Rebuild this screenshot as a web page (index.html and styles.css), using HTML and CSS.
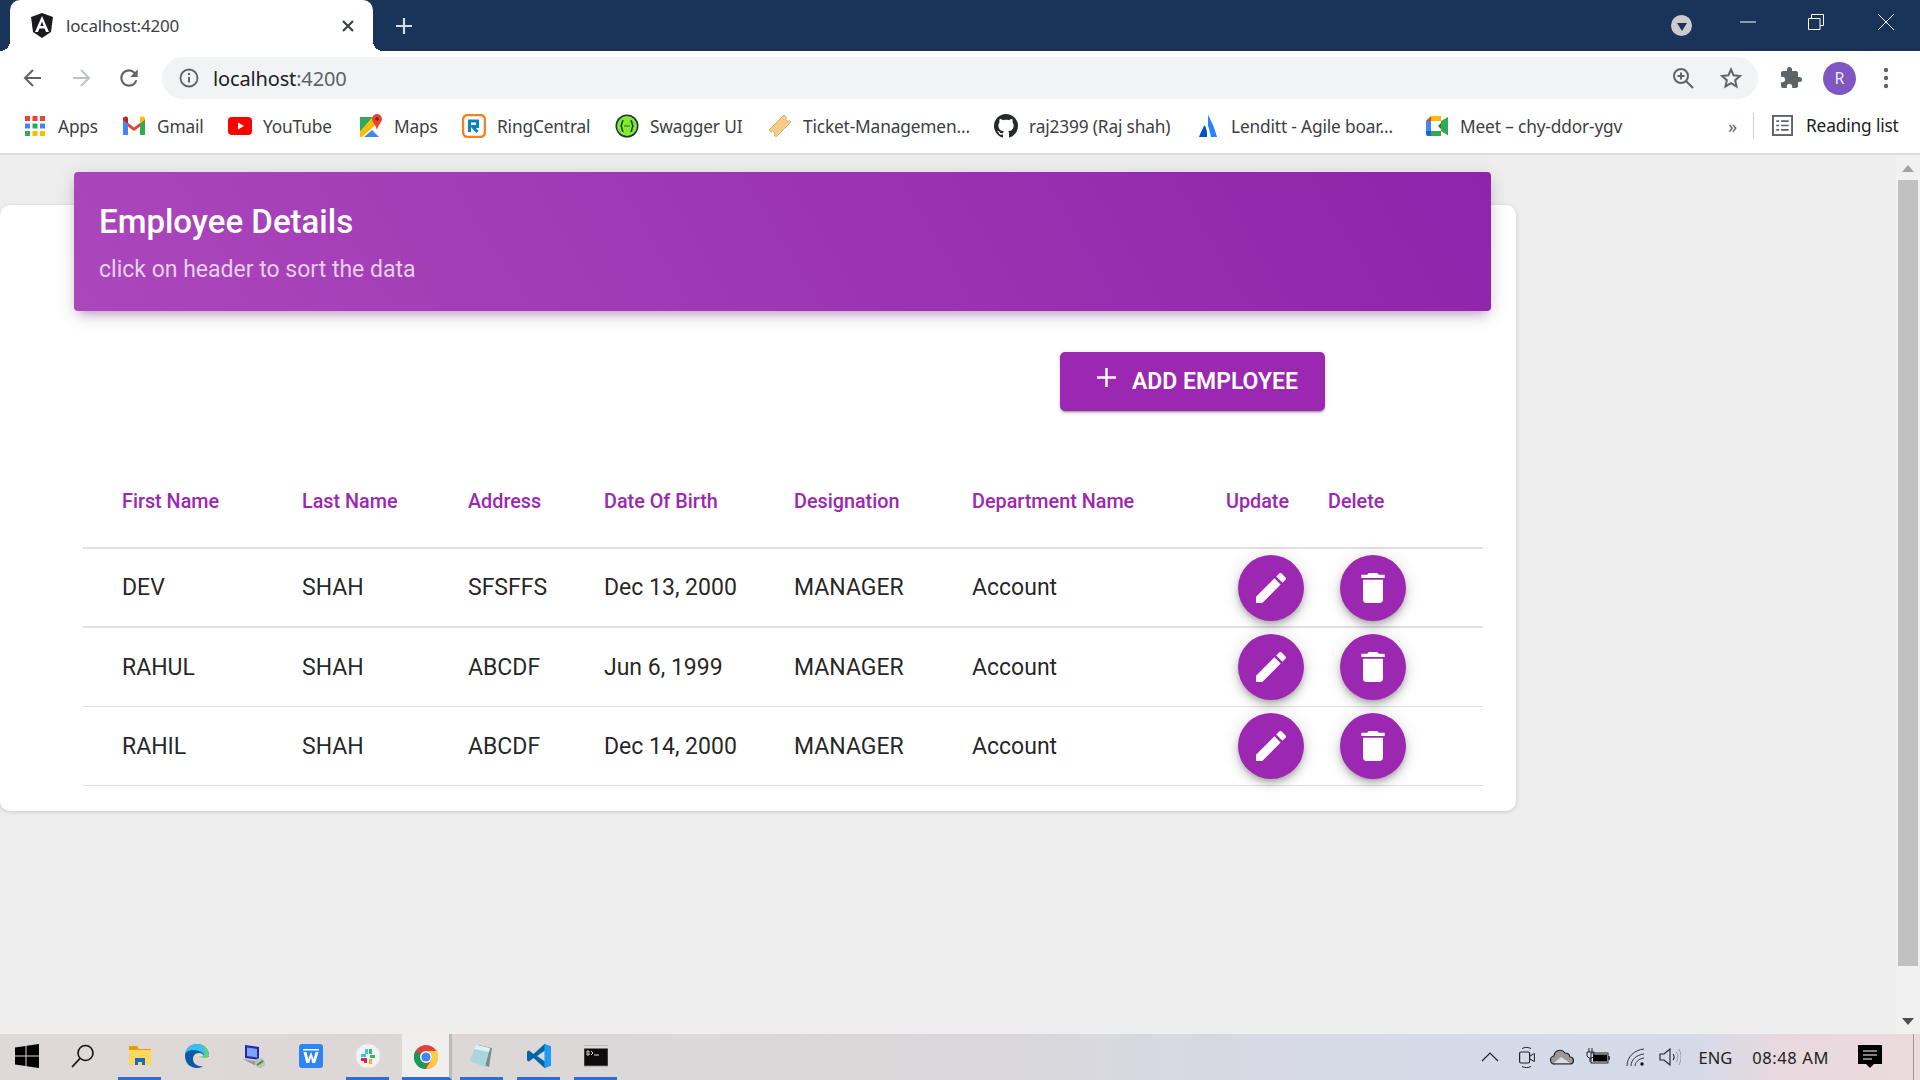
FILE: index.html
```html
<!DOCTYPE html>
<html lang="en">
<head>
<meta charset="utf-8">
<title>localhost:4200</title>
<link rel="stylesheet" href="styles.css">
</head>
<body>
<header class="chrome">
  <div class="tabstrip">
    <div class="tab">
      <svg class="favicon" viewBox="0 0 24 26"><path fill="#1b1b1f" d="M12 0 1 4l2 15 9 6 9-6 2-15z"/><path fill="#fff" d="M12 3 5 19h3l1.400-3.500h5.200L16 19h3zm0 5.500 1.700 4.500h-3.400z"/></svg>
      <span class="tab-title">localhost:4200</span>
      <svg class="tab-close" viewBox="0 0 14 14"><path d="M2 2l10 10M12 2 2 12" stroke="#3c4043" stroke-width="2.200" fill="none"/></svg>
    </div>
    <svg class="newtab" viewBox="0 0 18 18"><path d="M9 1v16M1 9h16" stroke="#d5dae3" stroke-width="2.200" fill="none"/></svg>
    <div class="strip-right">
      <span class="tabsearch"><svg viewBox="0 0 10 8" class="tabsearch-arrow"><path d="M0 0h10L5 8z" fill="#1a3359"/></svg></span>
      <svg class="winbtn min" viewBox="0 0 16 16"><path d="M0 8h16" stroke="#fff" stroke-width="1" fill="none"/></svg>
      <svg class="winbtn restore" viewBox="0 0 16 16"><path d="M.5 4.500h11.500v11H.5zM3.500 4.500v-4h12v11H12" stroke="#fff" stroke-width="1" fill="none"/></svg>
      <svg class="winbtn close" viewBox="0 0 16 16"><path d="M0 0l16 16M16 0 0 16" stroke="#fff" stroke-width="1" fill="none"/></svg>
    </div>
  </div>
  <div class="toolbar">
    <svg class="nav back" viewBox="0 0 24 24"><path d="M20 12H5M12 4l-8 8 8 8" stroke="#5f6368" stroke-width="2" fill="none"/></svg>
    <svg class="nav fwd" viewBox="0 0 24 24"><path d="M4 12h15M12 4l8 8-8 8" stroke="#bdc1c6" stroke-width="2" fill="none"/></svg>
    <svg class="nav reload" viewBox="0 0 24 24"><path fill="#5f6368" d="M17.650 6.350A7.958 7.958 0 0 0 12 4c-4.420 0-7.990 3.580-7.990 8s3.570 8 7.990 8c3.730 0 6.840-2.550 7.730-6h-2.080A5.990 5.990 0 0 1 12 18c-3.310 0-6-2.690-6-6s2.690-6 6-6c1.660 0 3.140.69 4.220 1.780L13 11h7V4z"/></svg>
    <div class="omnibox">
      <svg class="info" viewBox="0 0 20 20"><circle cx="10" cy="10" r="8.500" stroke="#5f6368" stroke-width="1.800" fill="none"/><path d="M10 9v5.500" stroke="#5f6368" stroke-width="2"/><circle cx="10" cy="6" r="1.200" fill="#5f6368"/></svg>
      <span class="url">localhost<span class="url-port">:4200</span></span>
      <svg class="zoomicon" viewBox="0 0 22 22"><circle cx="9" cy="9" r="7" stroke="#5f6368" stroke-width="2" fill="none"/><path d="M14 14l7 7M9 5.500v7M5.500 9h7" stroke="#5f6368" stroke-width="2" fill="none"/></svg>
      <svg class="star" viewBox="0 0 24 24"><path d="M12 3.500l2.600 5.800 6.300.7-4.700 4.200 1.300 6.200-5.500-3.200-5.500 3.200 1.300-6.200L3.100 10l6.300-.7z" stroke="#5f6368" stroke-width="2" fill="none"/></svg>
    </div>
    <svg class="puzzle" viewBox="0 0 24 24"><path fill="#5f6368" d="M20.500 11H19V7c0-1.100-.9-2-2-2h-4V3.500a2.500 2.500 0 0 0-5 0V5H4c-1.100 0-2 .9-2 2v3.800h1.500c1.500 0 2.700 1.200 2.700 2.700S5 16.200 3.500 16.200H2V20c0 1.100.9 2 2 2h3.800v-1.500c0-1.500 1.200-2.700 2.700-2.700s2.700 1.200 2.700 2.700V22H17c1.100 0 2-.9 2-2v-4h1.500a2.500 2.500 0 0 0 0-5z"/></svg>
    <span class="avatar">R</span>
    <svg class="dots" viewBox="0 0 6 22"><circle cx="3" cy="3" r="2.200" fill="#5f6368"/><circle cx="3" cy="11" r="2.200" fill="#5f6368"/><circle cx="3" cy="19" r="2.200" fill="#5f6368"/></svg>
  </div>
  <div class="bookmarks">
    <a class="bm"><svg class="bm-icon" viewBox="0 0 24 24"><path fill="#ea4335" d="M2 2h5v5H2zM9.500 2h5v5h-5zM17 2h5v5h-5z"/><path fill="#4285f4" d="M2 9.500h5v5H2z"/><path fill="#34a853" d="M9.500 9.500h5v5h-5z"/><path fill="#4285f4" d="M17 9.500h5v5h-5z"/><path fill="#34a853" d="M2 17h5v5H2z"/><path fill="#fbbc04" d="M9.500 17h5v5h-5zM17 17h5v5h-5z"/></svg><span>Apps</span></a>
    <a class="bm"><svg class="bm-icon" viewBox="0 0 24 24"><path fill="#ea4335" d="M1 5l11 8.500L23 5v4l-11 8L1 9z"/><path fill="#4285f4" d="M1 6v15h5V9.500z"/><path fill="#34a853" d="M23 6v15h-5V9.500z"/><path fill="#c5221f" d="M1 5c0-2 2-3 4-2l1 .8v5.700L1 6z"/><path fill="#fbbc04" d="M23 5c0-2-2-3-4-2l-1 .8v5.700L23 6z"/></svg><span>Gmail</span></a>
    <a class="bm"><svg class="bm-icon" viewBox="0 0 24 24"><rect x="0" y="3" width="24" height="18" rx="4" fill="#f00"/><path fill="#fff" d="M10 8.500l6 3.500-6 3.500z"/></svg><span>YouTube</span></a>
    <a class="bm"><svg class="bm-icon" viewBox="0 0 24 24"><path fill="#34a853" d="M1 3h13L1 18z"/><path fill="#fbbc04" d="M1 18 14 3l5 6L3 23H1z"/><path fill="#4285f4" d="M5 23l8-7 7 7z"/><path fill="#ea4335" d="M18 0a5 5 0 0 1 5 5c0 3-4 6-5 11-1-5-5-8-5-11a5 5 0 0 1 5-5z"/><circle cx="18" cy="5" r="1.800" fill="#8e1a12"/></svg><span>Maps</span></a>
    <a class="bm"><svg class="bm-icon" viewBox="0 0 24 24"><rect x="1" y="1" width="22" height="22" rx="5" fill="#fff" stroke="#f58220" stroke-width="2.500"/><path d="M7.500 18V7h8v5.500h-5l5 5.500" stroke="#0684bd" stroke-width="3" fill="none"/></svg><span>RingCentral</span></a>
    <a class="bm"><svg class="bm-icon" viewBox="0 0 24 24"><circle cx="12" cy="12" r="11.500" fill="#173647"/><circle cx="12" cy="12" r="10" fill="#85ea2d"/><path d="M8.500 6.500c-2 0-1 4-2.500 5.500 1.500 1.500.5 5.500 2.500 5.500M15.500 6.500c2 0 1 4 2.500 5.500-1.500 1.500-.5 5.500-2.500 5.500" stroke="#173647" stroke-width="1.500" fill="none"/><path d="M9.500 12h1M11.500 12h1M13.500 12h1" stroke="#173647" stroke-width="1.500"/></svg><span>Swagger UI</span></a>
    <a class="bm"><svg class="bm-icon" viewBox="0 0 24 24"><path fill="#f5cd85" stroke="#c9a468" stroke-width=".8" d="M16 1l2.500 2.500a2 2 0 0 0 3 3L23 8 8 23l-2-2a2 2 0 0 0-3-3l-2-2z"/></svg><span>Ticket-Managemen...</span></a>
    <a class="bm"><svg class="bm-icon" viewBox="0 0 16 16"><path fill="#24292e" d="M8 0C3.580 0 0 3.580 0 8c0 3.540 2.290 6.530 5.470 7.590.4.070.55-.17.55-.38 0-.19-.01-.82-.01-1.490-2.010.37-2.530-.49-2.690-.94-.09-.23-.48-.94-.82-1.130-.28-.15-.68-.52-.01-.53.63-.01 1.080.58 1.230.82.720 1.210 1.870.87 2.330.66.070-.52.280-.87.510-1.070-1.780-.2-3.640-.89-3.640-3.950 0-.87.310-1.590.820-2.150-.08-.2-.36-1.020.08-2.120 0 0 .67-.21 2.200.82.640-.18 1.320-.27 2-.27s1.360.09 2 .27c1.530-1.040 2.200-.82 2.200-.82.440 1.100.160 1.920.080 2.120.51.560.82 1.270.82 2.150 0 3.070-1.870 3.750-3.650 3.950.29.250.54.730.54 1.480 0 1.070-.01 1.930-.01 2.200 0 .21.150.46.550.38A8.013 8.013 0 0 0 16 8c0-4.420-3.580-8-8-8z"/></svg><span>raj2399 (Raj shah)</span></a>
    <a class="bm"><svg class="bm-icon" viewBox="0 0 24 24"><path fill="#2684ff" d="M12 1c3 5 7 14 9 22h-6c-1-5-2-9-3-11z"/><path fill="#0052cc" d="M8.500 11C7 14 4.500 19 3 23h8c.500-4-.500-9-2.500-12z"/></svg><span>Lenditt - Agile boar...</span></a>
    <a class="bm"><svg class="bm-icon" viewBox="0 0 24 24"><path fill="#ea4335" d="M6 2 1 7h5z"/><path fill="#fbbc04" d="M6 2h10v5H6z"/><path fill="#4285f4" d="M1 7h5v10H1z"/><path fill="#1967d2" d="M1 17h5v5H3a2 2 0 0 1-2-2z"/><path fill="#34a853" d="M6 17h10v5H6zM16 7v10l7 4.500V3z"/><path fill="#188038" d="M13 12l3-3v6z"/></svg><span>Meet – chy-ddor-ygv</span></a>
    <span class="more">»</span>
    <span class="bm-sep"></span>
    <a class="bm reading"><svg class="read-icon" viewBox="0 0 22 22"><rect x="1" y="1" width="20" height="20" fill="none" stroke="#5f6368" stroke-width="2"/><path d="M4.500 6.500h3M9.500 6.500h8M4.500 11h3M9.500 11h8M4.500 15.500h3M9.500 15.500h8" stroke="#5f6368" stroke-width="1.800"/></svg><span>Reading list</span></a>
  </div>
</header>

<div class="viewport">
  <main class="page">
    <section class="card">
      <div class="card-header">
        <h1 class="card-title">Employee Details</h1>
        <p class="card-sub">click on header to sort the data</p>
      </div>
      <div class="actions">
        <button class="add-btn"><svg class="plus" viewBox="0 0 19 19"><path d="M9.500 0v19M0 9.500h19" stroke="#fff" stroke-width="2.400" fill="none"/></svg><span>ADD EMPLOYEE</span></button>
      </div>
      <table class="emp-table">
        <colgroup><col class="c1"><col class="c2"><col class="c3"><col class="c4"><col class="c5"><col class="c6"><col class="c7"><col class="c8"></colgroup>
        <thead>
          <tr><th>First Name</th><th>Last Name</th><th>Address</th><th>Date Of Birth</th><th>Designation</th><th>Department Name</th><th>Update</th><th>Delete</th></tr>
        </thead>
        <tbody>
          <tr>
            <td>DEV</td><td>SHAH</td><td>SFSFFS</td><td>Dec 13, 2000</td><td>MANAGER</td><td>Account</td>
            <td><button class="fab"><svg viewBox="0 0 24 24"><path d="M3 17.250V21h3.750L17.810 9.940l-3.750-3.750L3 17.250zM20.710 7.040c.39-.39.39-1.020 0-1.410l-2.340-2.340c-.39-.39-1.020-.39-1.410 0l-1.830 1.830 3.750 3.750 1.830-1.830z"/></svg></button></td>
            <td><button class="fab"><svg viewBox="0 0 24 24"><path d="M6 19c0 1.100.9 2 2 2h8c1.100 0 2-.9 2-2V7H6v12zM19 4h-3.500l-1-1h-5l-1 1H5v2h14V4z"/></svg></button></td>
          </tr>
          <tr>
            <td>RAHUL</td><td>SHAH</td><td>ABCDF</td><td>Jun 6, 1999</td><td>MANAGER</td><td>Account</td>
            <td><button class="fab"><svg viewBox="0 0 24 24"><path d="M3 17.250V21h3.750L17.810 9.940l-3.750-3.750L3 17.250zM20.710 7.040c.39-.39.39-1.020 0-1.410l-2.340-2.340c-.39-.39-1.020-.39-1.410 0l-1.830 1.830 3.750 3.750 1.830-1.830z"/></svg></button></td>
            <td><button class="fab"><svg viewBox="0 0 24 24"><path d="M6 19c0 1.100.9 2 2 2h8c1.100 0 2-.9 2-2V7H6v12zM19 4h-3.500l-1-1h-5l-1 1H5v2h14V4z"/></svg></button></td>
          </tr>
          <tr>
            <td>RAHIL</td><td>SHAH</td><td>ABCDF</td><td>Dec 14, 2000</td><td>MANAGER</td><td>Account</td>
            <td><button class="fab"><svg viewBox="0 0 24 24"><path d="M3 17.250V21h3.750L17.810 9.940l-3.750-3.750L3 17.250zM20.710 7.040c.39-.39.39-1.020 0-1.410l-2.340-2.340c-.39-.39-1.020-.39-1.410 0l-1.830 1.830 3.750 3.750 1.830-1.830z"/></svg></button></td>
            <td><button class="fab"><svg viewBox="0 0 24 24"><path d="M6 19c0 1.100.9 2 2 2h8c1.100 0 2-.9 2-2V7H6v12zM19 4h-3.500l-1-1h-5l-1 1H5v2h14V4z"/></svg></button></td>
          </tr>
        </tbody>
      </table>
    </section>
  </main>
  <aside class="scrollbar">
    <svg class="sb-arrow" viewBox="0 0 12 7"><path d="M6 0l6 7H0z" fill="#a3a3a3"/></svg>
    <div class="sb-thumb"></div>
    <svg class="sb-arrow" viewBox="0 0 12 7"><path d="M0 0h12L6 7z" fill="#505050"/></svg>
  </aside>
</div>

<footer class="taskbar">
  <div class="tb-apps">
    <div class="tb-item"><div class="tb-inner"><svg class="tb-icon" viewBox="0 0 24 24"><path fill="#000" d="M0 3.500 10.500 2v9.500H0zM11.500 1.800 24 0v11.500H11.500zM0 12.500h10.500V22L0 20.500zM11.500 12.500H24V24l-12.500-1.800z"/></svg></div></div>
    <div class="tb-item"><div class="tb-inner"><svg class="tb-icon" viewBox="0 0 24 24"><circle cx="14.500" cy="9" r="7.500" fill="none" stroke="#111" stroke-width="1.600"/><path d="M9 14.500 1 23" stroke="#111" stroke-width="1.800"/></svg></div></div>
    <div class="tb-item"><div class="tb-inner on"><svg class="tb-icon" viewBox="0 0 24 24"><path fill="#e0a100" d="M1 2h8l2 3h12v4H1z"/><path fill="#ffd75e" d="M1 6h22v15H1z"/><path fill="#0f6fc6" d="M7 14h10v7h-3v-3h-4v3H7z"/></svg></div></div>
    <div class="tb-item"><div class="tb-inner"><svg class="tb-icon" viewBox="0 0 24 24"><path fill="#0c59a4" d="M12 0C5 0 0 5 0 12s5 12 12 12c3 0 5-1 6-2-5 1-10-2-10-7 0-3 2-6 6-6 3 0 5 2 5 4h5C24 5 19 0 12 0z"/><path fill="#35c1f1" d="M12 0C5 0 0 5 0 12c0-4 4-6 8-6 6 0 12 3 11 7 4 0 5-1 5-2C24 5 19 0 12 0z"/><path fill="#6ad06f" d="M24 12c0-6-4-11-10-12 5 2 7 6 6 10-1 3-5 3-7 2 2 2 11 3 11 0z"/></svg></div></div>
    <div class="tb-item"><div class="tb-inner"><svg class="tb-icon" viewBox="0 0 24 24"><path fill="#1c2fa8" d="M3 1l14 2v13L3 14z"/><path fill="#7fa4ff" d="M5 3.500l10 1.500v8.500L5 12z"/><path fill="#999" d="M1 15l12 2 2 3-3 1z"/><circle cx="18" cy="19" r="5" fill="#b9c1b9"/><path d="M15 21l6-4" stroke="#2f8f3a" stroke-width="1.600"/></svg></div></div>
    <div class="tb-item"><div class="tb-inner"><svg class="tb-icon" viewBox="0 0 24 24"><rect width="24" height="24" rx="3" fill="#2b85f2"/><path d="M4.500 8h3l1.800 7 2.700-7 2.700 7 1.800-7h3l-3.300 11h-3L12 13l-1.700 6h-3z" fill="#fff"/><path d="M4 5h16v1.500H4z" fill="#fff"/></svg></div></div>
    <div class="tb-item"><div class="tb-inner on"><svg class="tb-icon" viewBox="0 0 24 24"><circle cx="12" cy="12" r="12" fill="#f2f2f2"/><path d="M13 5h3v5h-3z" fill="#2eb67d"/><path d="M5 10h5v3H5z" fill="#36c5f0"/><path d="M14 11h5v3h-5z" fill="#2eb67d"/><path d="M8 14h3v5H8z" fill="#e01e5a"/><path d="M5 14h3v3H5z" fill="#e01e5a"/><path d="M13 15h3v5h-3z" fill="#ecb22e"/><path d="M9 5h3v5H9z" fill="#36c5f0"/></svg></div></div>
    <div class="tb-item"><div class="tb-inner on active"><svg class="tb-icon" viewBox="0 0 24 24"><circle cx="12" cy="12" r="12" fill="#db4437"/><path fill="#0f9d58" d="M12 24A12 12 0 0 1 1.600 6l5.200 9a6 6 0 0 0 5.200 3z"/><path fill="#0f9d58" d="M1.600 6 6.800 15l5-3z"/><path fill="#ffcd40" d="M12 6h10.400A12 12 0 0 1 12 24l5.200-9A6 6 0 0 0 12 6z"/><circle cx="12" cy="12" r="6" fill="#fff"/><circle cx="12" cy="12" r="4.600" fill="#4285f4"/></svg></div></div>
    <div class="tb-item"><div class="tb-inner on"><svg class="tb-icon" viewBox="0 0 24 24"><path fill="#7a8c7c" d="M8 1l14 3-3 19-3-1z"/><path fill="#a9d6de" d="M6 1l14 3-5 19L0 17z"/><path fill="#dff1f4" d="M6 1l14 3-1 4L4 5z"/></svg></div></div>
    <div class="tb-item"><div class="tb-inner on"><svg class="tb-icon" viewBox="0 0 24 24"><path fill="#0065a9" d="M17.500 0 6.500 10 2 6.500 0 7.500v9l2 1 4.500-3.500 11 10 6.500-2.500V2.500zM18 6.500v11L10 12z"/><path fill="#1f9cf0" d="M17.500 0 24 2.500v19L17.500 24z"/></svg></div></div>
    <div class="tb-item"><div class="tb-inner on"><svg class="tb-icon" viewBox="0 0 24 24"><rect y="2" width="24" height="20" fill="#0c0c0c" stroke="#888" stroke-width=".8"/><path fill="#dcdcdc" d="M0 2h24v2.500H0z"/><path d="M3 7h2v4H3zM7 7l2 2-2 2M10 11h5" stroke="#ddd" stroke-width="1" fill="none"/></svg></div></div>
  </div>
  <div class="tray">
    <svg class="tray-chev" viewBox="0 0 18 10"><path d="M1 9l8-8 8 8" stroke="#222" stroke-width="1.200" fill="none"/></svg>
    <svg class="tray-video" viewBox="0 0 16 22"><rect x=".6" y="6" width="10" height="11" rx="1.500" fill="none" stroke="#222" stroke-width="1.200"/><path d="M11 10l4.400-2.500v8L11 13M3 2.500c3-1.500 6-1.500 9 0M3 20.500c3 1.500 6 1.500 9 0" stroke="#222" stroke-width="1" fill="none"/></svg>
    <svg class="tray-cloud" viewBox="0 0 24 16"><path d="M5 15a4 4 0 0 1-1-8 6 6 0 0 1 11-3 5 5 0 0 1 5 4 3.500 3.500 0 0 1 0 7z" fill="#9a9a9a" stroke="#222" stroke-width="1.200"/><path d="M4 14l7-6 9 6z" fill="#dedede"/></svg>
    <svg class="tray-batt" viewBox="0 0 24 18"><path d="M3 0v4M6 0v4M1 4h7v4l-2 2H3L1 8zM4 10v4" stroke="#222" stroke-width="1" fill="none"/><rect x="5" y="5" width="17" height="10" fill="none" stroke="#222" stroke-width="1"/><rect x="7" y="6.500" width="14" height="7" fill="#000"/><path d="M23 8v4" stroke="#222" stroke-width="1.500"/></svg>
    <svg class="tray-wifi" viewBox="0 0 18 18"><path d="M1 18C1 9 8 2 18 1M5 18c0-6 5-11 13-12M9 18c0-3 3-7 9-8" stroke="#333" stroke-width="1" fill="none"/><circle cx="16" cy="16" r="1.700" fill="#111"/></svg>
    <svg class="tray-vol" viewBox="0 0 22 18"><path d="M1 6h4l6-5v16l-6-5H1z" fill="none" stroke="#222" stroke-width="1.100"/><path d="M14 6c1.500 2 1.500 4 0 6" stroke="#222" stroke-width="1.100" fill="none"/><path d="M17 3.500c2.500 3.500 2.500 7.500 0 11M19.800 1c3 5 3 11 0 16" stroke="#999" stroke-width="1" fill="none"/></svg>
    <span class="tray-lang">ENG</span>
    <span class="tray-time">08:48 AM</span>
    <svg class="tray-note" viewBox="0 0 24 24"><path d="M0 0h24v19h-8l-4 4-4-4H0z" fill="#000"/><path d="M5 6h14M5 10h14M5 14h9" stroke="#fff" stroke-width="1"/></svg>
    <span class="tray-edge"></span>
  </div>
</footer>
</body>
</html>
```

FILE: styles.css
```css
* { box-sizing: border-box; }
html, body { margin: 0; height: 100%; }
body {
  display: flex;
  flex-direction: column;
  height: 1080px;
  overflow: hidden;
  background: #eee;
  font-family: Roboto, "Noto Sans", sans-serif;
}
svg { display: block; flex: none; }

/* browser chrome */
.chrome { flex: none; background: #fff; font-family: "Noto Sans", "Open Sans", sans-serif; }
.tabstrip { height: 51px; background: #1a3359; display: flex; align-items: flex-end; padding-left: 10px; }
.tab {
  position: relative;
  width: 363px; height: 51px; background: #fff; border-radius: 10px 10px 0 0;
  display: flex; align-items: center; padding-left: 20px; padding-right: 18px;
}
.tab::before, .tab::after { content: ""; position: absolute; bottom: 0; width: 10px; height: 10px; }
.tab::before { left: -10px; background: radial-gradient(circle at 0 0, transparent 10px, #fff 10px); }
.tab::after { right: -10px; background: radial-gradient(circle at 100% 0, transparent 10px, #fff 10px); }
.favicon { width: 24px; height: 26px; }
.tab-title { margin-left: 12px; font-size: 17px; color: #3c4043; letter-spacing: -.15px; flex: 1; }
.tab-close { width: 14px; height: 14px; }
.newtab { width: 18px; height: 18px; margin: 0 0 16px 22px; }
.strip-right { margin-left: auto; height: 51px; display: flex; align-items: flex-start; }
.tabsearch {
  width: 21px; height: 21px; border-radius: 50%; background: #ccc; margin-top: 15px;
  display: flex; align-items: center; justify-content: center;
}
.tabsearch-arrow { width: 10px; height: 8px; margin-top: 2px; }
.winbtn { width: 16px; height: 16px; margin-top: 14px; }
.min { margin-left: 48px; }
.restore { margin-left: 52px; }
.close { margin-left: 54px; margin-right: 26px; }

.toolbar { height: 52px; display: flex; align-items: center; padding: 2px 21px 0 21px; }
.nav { width: 24px; height: 24px; }
.fwd { margin-left: 24px; }
.reload { margin-left: 23px; width: 26px; height: 26px; }
.omnibox {
  margin-left: 20px; width: 1596px; height: 42px; border-radius: 21px; background: #f1f3f4;
  display: flex; align-items: center; padding-left: 17px; padding-right: 15px;
}
.info { width: 20px; height: 20px; }
.url { margin-left: 14px; font-size: 20px; letter-spacing: -.15px; color: #202124; flex: 1; }
.url-port { color: #5f6368; }
.zoomicon { width: 22px; height: 22px; }
.star { width: 24px; height: 24px; margin-left: 25px; }
.puzzle { width: 24px; height: 24px; margin-left: 21px; }
.avatar {
  width: 33px; height: 33px; margin-left: 20px; border-radius: 50%; background: #7e57c2; color: #f0e6ff;
  display: flex; align-items: center; justify-content: center; font-size: 16px;
}
.dots { width: 6px; height: 22px; margin-left: 27px; }

.bookmarks {
  position: relative;
  height: 52px; border-bottom: 2px solid #dcdcde; padding: 0 0 4px 23px;
  display: grid; align-items: center;
  grid-template-columns: 99px 106px 131px 103px 153px 153px 226px 202px 229px 303px 26px auto;
  font-size: 17.300px; color: #3c4043; letter-spacing: -.15px;
}
.bm { display: flex; align-items: center; gap: 11px; white-space: nowrap; }
.bm-icon { width: 24px; height: 24px; }
.more { font-size: 18px; color: #5f6368; }
.bm-sep { width: 1px; height: 26px; background: #ccc; justify-self: start; margin-left: -1px; }
.reading { position: absolute; left: 1772px; top: 11px; gap: 13px; color: #202124; }
.read-icon { width: 21px; height: 21px; }

/* page */
.viewport { flex: 1; min-height: 0; display: flex; }
.page { flex: 1; min-width: 0; padding-top: 50px; }
.card {
  width: 1516px; height: 606px; background: #fff; border-radius: 10px;
  box-shadow: 0 1px 4px rgba(0,0,0,.16);
}
.card-header {
  margin-left: 74px; width: 1417px; height: 139px; position: relative; top: -33px; margin-bottom: -33px;
  padding: 30px 25px 0; border-radius: 4px; color: #fff;
  background: linear-gradient(60deg, #ab47bc, #8e24aa);
  box-shadow: 0 4px 20px rgba(0,0,0,.14), 0 7px 10px -5px rgba(156,39,176,.4);
}
.card-title { margin: 0; font-size: 33px; line-height: 40px; font-weight: 500; }
.card-sub { margin: 14px 0 0; font-size: 23px; line-height: 28px; color: rgba(255,255,255,.75); }
.actions { display: flex; padding-left: 1060px; margin-top: 41px; }
.add-btn {
  width: 265px; height: 59px; border: 0; border-radius: 5px; background: #9c27b0; color: #fff;
  display: flex; align-items: center; padding-left: 37px;
  font: 600 23px Roboto, sans-serif; letter-spacing: 0;
  box-shadow: 0 3px 1px -2px rgba(0,0,0,.2), 0 2px 2px 0 rgba(0,0,0,.14), 0 1px 5px 0 rgba(0,0,0,.12);
}
.plus { width: 19px; height: 19px; margin: 0 16px 8px 0; }
.emp-table {
  margin: 51px 0 0 83px; width: 1400px; table-layout: fixed;
  border-collapse: separate; border-spacing: 0;
}
.c1 { width: 219px; } .c2 { width: 166px; } .c3 { width: 136px; } .c4 { width: 190px; }
.c5 { width: 178px; } .c6 { width: 254px; } .c7 { width: 102px; } .c8 { width: 155px; }
.emp-table th {
  height: 87px; padding: 0 0 7px; text-align: left; vertical-align: middle;
  font-size: 19.800px; font-weight: 500; color: #9c27b0; border-bottom: 2px solid #e0e0e0;
}
.emp-table td {
  height: 79px; padding: 0; font-size: 23px; color: rgba(0,0,0,.87); border-bottom: 1px solid #e0e0e0; vertical-align: middle;
}
.emp-table th:first-child, .emp-table td:first-child { padding-left: 39px; }
.emp-table tbody tr:first-child td { border-bottom-width: 2px; }
.fab {
  display: flex; align-items: center; justify-content: center;
  width: 66px; height: 66px; margin-left: 12px; padding: 0; border: 0; border-radius: 50%; background: #9c27b0;
  box-shadow: 0 3px 5px -1px rgba(0,0,0,.2), 0 6px 10px 0 rgba(0,0,0,.14), 0 1px 18px 0 rgba(0,0,0,.12);
}
.fab svg { width: 40px; height: 40px; fill: #fff; }

/* scrollbar */
.scrollbar { flex: none; width: 24px; background: #f1f1f1; display: flex; flex-direction: column; align-items: center; padding-top: 10px; }
.sb-arrow { width: 12px; height: 7px; }
.sb-thumb { width: 20px; height: 786px; margin: 8px 0 52px; background: #c1c1c1; }

/* taskbar */
.taskbar {
  flex: none; height: 46px; display: flex; justify-content: space-between;
  background: linear-gradient(90deg, #ded9d6 0%, #dcd7d9 45%, #d3dbe9 78%, #d4dae8 88%, #e9d9de 93%, #ebdade 100%);
}
.tb-apps { display: flex; padding-left: 0; }
.tb-item { width: 57px; display: flex; justify-content: center; }
.tb-item:first-child { width: 54px; }
.tb-inner { width: 43px; height: 46px; display: flex; align-items: center; justify-content: center; border-bottom: 3px solid transparent; }
.tb-inner.on { border-bottom-color: #2b6fd0; }
.tb-inner.active { width: 50px; background: #f1efee; margin-left: 5px; border-right: 3px solid #bbb; padding-top: 3px; }
.tb-icon { width: 24px; height: 24px; }
.tray { display: flex; align-items: center; font: 16.500px "Noto Sans", sans-serif; color: #222; }
.tray-chev { width: 18px; height: 10px; }
.tray-video { width: 16px; height: 22px; margin-left: 20px; }
.tray-cloud { width: 24px; height: 16px; margin-left: 15px; }
.tray-batt { width: 24px; height: 18px; margin-left: 12px; }
.tray-wifi { width: 18px; height: 18px; margin-left: 16px; }
.tray-vol { width: 22px; height: 18px; margin-left: 15px; }
.tray-lang { margin-left: 17px; }
.tray-time { margin-left: 20px; letter-spacing: .6px; }
.tray-note { width: 24px; height: 24px; margin-left: 29px; }
.tray-edge { width: 1px; height: 46px; margin-left: 31px; margin-right: 6px; background: #999; }
```
